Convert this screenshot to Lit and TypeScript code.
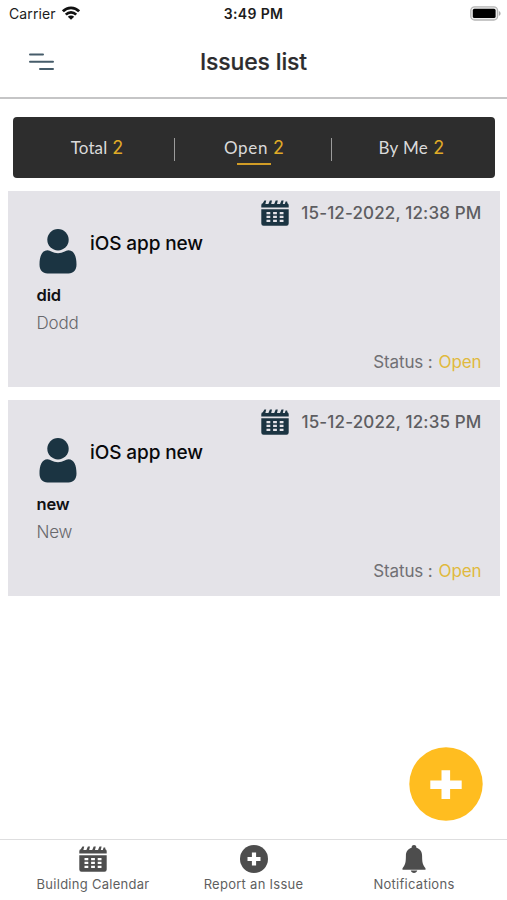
import { LitElement, html, css } from "lit";
import { customElement, property } from "lit/decorators.js";

const calendar = html`<svg class="calendar" viewBox="0 0 28 26" width="28" height="26">
  <path fill="currentColor" d="M.3 7.600V5.200Q.3 3.400 1.800 3.300L3.400.5H5.200L4.400 3.900H7.400L8.900.5H11L10.200 3.900H13.200L14.700.5H16.800L16 3.900H19L20.500.5H22.600L21.800 3.900H23.800L24.600 1.500H26.200L26.400 3.300Q27.700 3.700 27.700 5.200V7.600Z"/>
  <path fill="currentColor" fill-rule="evenodd" d="M.3 9.200H27.700V23.500Q27.700 25.700 25.500 25.700H2.500Q.3 25.700.3 23.500ZM5.500 11.900v2.300h3.800V11.900ZM12.100 11.900v2.300h3.800V11.900ZM18.700 11.900v2.300h3.800V11.900ZM5.500 15.800v2.300h3.800v-2.300ZM12.100 15.800v2.300h3.800v-2.300ZM18.700 15.800v2.300h3.800v-2.300ZM5.500 19.700V22h3.800v-2.300ZM12.100 19.700V22h3.800v-2.300ZM18.700 19.700V22h3.800v-2.300Z"/>
</svg>`;

const plusCircle = html`<svg viewBox="0 0 28 28" width="28" height="28">
  <circle cx="14" cy="14" r="14" fill="currentColor"/>
  <path fill="#fff" d="M11.900 7.500h4.200v4.400h4.400v4.200h-4.400v4.400h-4.200v-4.400H7.500v-4.200h4.400Z"/>
</svg>`;

const bell = html`<svg viewBox="0 0 24 28" width="24" height="28">
  <path fill="currentColor" d="M12 0c1.700 0 2.500 1.200 2.400 2.800 3.900 1.200 5.700 4 5.700 8 0 6.300.6 9.400 3.400 12.400v1.500H.5v-1.500c2.800-3 3.400-6.100 3.400-12.400 0-4 1.800-6.800 5.700-8C9.500 1.200 10.300 0 12 0ZM8.700 25.600h6.600c-.5 1.600-1.700 2.400-3.300 2.400s-2.800-.8-3.300-2.400Z"/>
</svg>`;

@customElement("issue-card")
class IssueCard extends LitElement {
  @property() date = "";
  @property() heading = "";
  @property() subject = "";
  @property() detail = "";

  static styles = css`
    :host { display: block; box-sizing: border-box; height: 196px; background: #e4e3e8; padding: 9px 18px 0 28.500px; }
    svg { display: block; flex: none; }
    .date { display: flex; height: 27px; align-items: center; justify-content: flex-end; gap: 12px; color: #5d5d61; font-size: 17px; font-weight: 500; letter-spacing: 0.15px; white-space: nowrap; }
    .calendar { color: #1b3442; }
    .person { display: flex; align-items: flex-start; height: 46px; gap: 13px; padding-left: 2.500px; }
    .person svg { margin-top: 2px; }
    .name { font-size: 19px; line-height: 24px; margin-top: 5px; font-weight: 500; color: #09090b; letter-spacing: -0.1px; }
    .subject { margin-top: 11px; font-size: 16.500px; line-height: 22px; font-weight: 600; color: #111114; letter-spacing: -0.15px; }
    .detail { margin-top: 6px; font-size: 17px; line-height: 22px; font-weight: 300; color: #68686c; letter-spacing: -0.2px; }
    .status { margin-top: 17px; display: flex; justify-content: flex-end; gap: 6px; font-size: 17px; line-height: 22px; color: #707074; letter-spacing: -0.12px; }
    .open { color: #e0b93d; }
  `;

  render() {
    return html`
      <div class="date">${calendar}<span>${this.date}</span></div>
      <div class="person">
        <svg viewBox="0 0 38 45" width="38" height="45">
          <circle cx="19" cy="10.700" r="10.700" fill="#1b3442"/>
          <path fill="#1b3442" d="M8.500 21.200c3 0 5.200 3 10.500 3s7.500-3 10.500-3c5.800 0 8 6.500 8 14.300 0 5.700-3 8.900-8 8.900h-21c-5 0-8-3.200-8-8.900 0-7.800 2.200-14.300 8-14.300Z"/>
        </svg>
        <span class="name">${this.heading}</span>
      </div>
      <div class="subject">${this.subject}</div>
      <div class="detail">${this.detail}</div>
      <div class="status"><span>Status :</span><span class="open">Open</span></div>
    `;
  }
}

@customElement("app-root")
class AppRoot extends LitElement {
  static styles = css`
    :host { display: flex; flex-direction: column; height: 900px; background: #fff; font-family: Inter, "Liberation Sans", sans-serif; position: relative; overflow: hidden; }
    svg { display: block; flex: none; }
    .statusbar { height: 28px; box-sizing: border-box; padding: 0 6px 1px 9px; display: grid; grid-template-columns: 1fr auto 1fr; align-items: center; font-size: 14px; color: #1c1c1c; }
    .carrier { display: flex; align-items: center; gap: 6px; letter-spacing: 0.1px; }
    .carrier svg { margin-top: -1px; }
    .time { font-weight: 600; font-size: 14px; letter-spacing: 0.35px; margin-left: -3px; }
    .battery { justify-self: end; margin-top: -1px; }
    .header { height: 71px; box-sizing: border-box; border-bottom: 2px solid #c5c5c6; display: grid; grid-template-columns: 1fr auto 1fr; align-items: center; padding: 0 29px; }
    .menu { margin-top: -2px; }
    h1 { margin: -2px 0 0; font-size: 23px; line-height: 28px; font-weight: 500; color: #2c2c2e; letter-spacing: -0.15px; -webkit-text-stroke: 0.2px #2c2c2e; }
    .tabs { margin: 18px 12.500px 0 13px; height: 61px; border-radius: 4px; background: #2d2d2d; display: grid; grid-template-columns: 161px 1px 156px 1px 1fr; align-items: center; flex: none; }
    .divider { height: 23px; background: #9b9b9b; margin-top: 3px; }
    .tab { display: flex; justify-content: center; position: relative; align-items: baseline; gap: 5px; font: 17px/24px Lato, sans-serif; color: #dadada; letter-spacing: 0.1px; }
    .total { padding-left: 7px; }
    .count { color: #e0ab27; font: 400 18px/24px Inter, sans-serif; letter-spacing: 0; }
    .active { letter-spacing: 0.65px; padding-left: 2px; }
    .byme { letter-spacing: 0.35px; padding-right: 4px; }
    .active::after { content: ""; position: absolute; left: 62px; top: 27px; width: 34px; height: 2px; background: #d19c26; }
    .list { padding: 12.500px 7.500px 0 8px; display: flex; flex-direction: column; gap: 13px; flex: 1; }
    .fab { position: absolute; left: 409px; top: 747px; }
    .nav { height: 61.500px; box-sizing: border-box; border-top: 1.500px solid #dededf; display: grid; grid-template-columns: repeat(3, 160.500px); justify-content: center; color: #4d4d4d; }
    .item { display: flex; flex-direction: column; align-items: center; padding-top: 5px; }
    .icon { height: 28px; display: flex; align-items: center; }
    .label { margin-top: 2.500px; font-size: 13px; line-height: 18px; color: #5f5f5f; letter-spacing: 0.27px; white-space: nowrap; }
  `;

  render() {
    return html`
      <div class="statusbar">
        <div class="carrier"><span>Carrier</span>
          <svg width="18" height="14" viewBox="0 0 18 14">
            <path fill="none" stroke="#111" stroke-width="2.700" d="M.9 5.300C5.400.6 12.600.6 17.100 5.300M3.800 8.600c3-3 7.400-3 10.400 0"/>
            <path fill="#111" d="M9 13.800 5.800 10.700c1.700-1.600 4.700-1.600 6.400 0Z"/>
          </svg>
        </div>
        <span class="time">3:49 PM</span>
        <svg class="battery" width="31" height="15" viewBox="0 0 31 15">
          <rect x=".8" y=".8" width="26.800" height="13.200" rx="3.800" fill="#eee" stroke="#b5b5b5" stroke-width="1.300"/>
          <rect x="2.800" y="2.800" width="22.800" height="9.200" rx="1.600"/>
          <path fill="#aaa" d="M28.900 5c2.200.8 2.200 4 0 4.800Z"/>
        </svg>
      </div>
      <div class="header">
        <svg class="menu" width="25" height="18" viewBox="0 0 25 18">
          <path stroke="#465c6a" stroke-width="2" stroke-linecap="round" d="M1 1.400h13M1 8.700h23M11 16h13"/>
        </svg>
        <h1>Issues list</h1>
      </div>
      <div class="tabs">
        <div class="tab total"><span>Total</span><span class="count">2</span></div>
        <div class="divider"></div>
        <div class="tab active"><span>Open</span><span class="count">2</span></div>
        <div class="divider"></div>
        <div class="tab byme"><span>By Me</span><span class="count">2</span></div>
      </div>
      <div class="list">
        <issue-card date="15-12-2022, 12:38 PM" heading="iOS app new" subject="did" detail="Dodd"></issue-card>
        <issue-card date="15-12-2022, 12:35 PM" heading="iOS app new" subject="new" detail="New"></issue-card>
      </div>
      <svg class="fab" width="74" height="74" viewBox="0 0 74 74">
        <circle cx="37" cy="37" r="36.700" fill="#ffbd20"/>
        <path fill="#fff" d="M32.500 23.300h8.600v10.200h11.600v8.500H41.100v10H32.500V42H21.300v-8.500h11.200Z"/>
      </svg>
      <div class="nav">
        <div class="item"><div class="icon">${calendar}</div><span class="label">Building Calendar</span></div>
        <div class="item"><div class="icon">${plusCircle}</div><span class="label">Report an Issue</span></div>
        <div class="item"><div class="icon">${bell}</div><span class="label">Notifications</span></div>
      </div>
    `;
  }
}
